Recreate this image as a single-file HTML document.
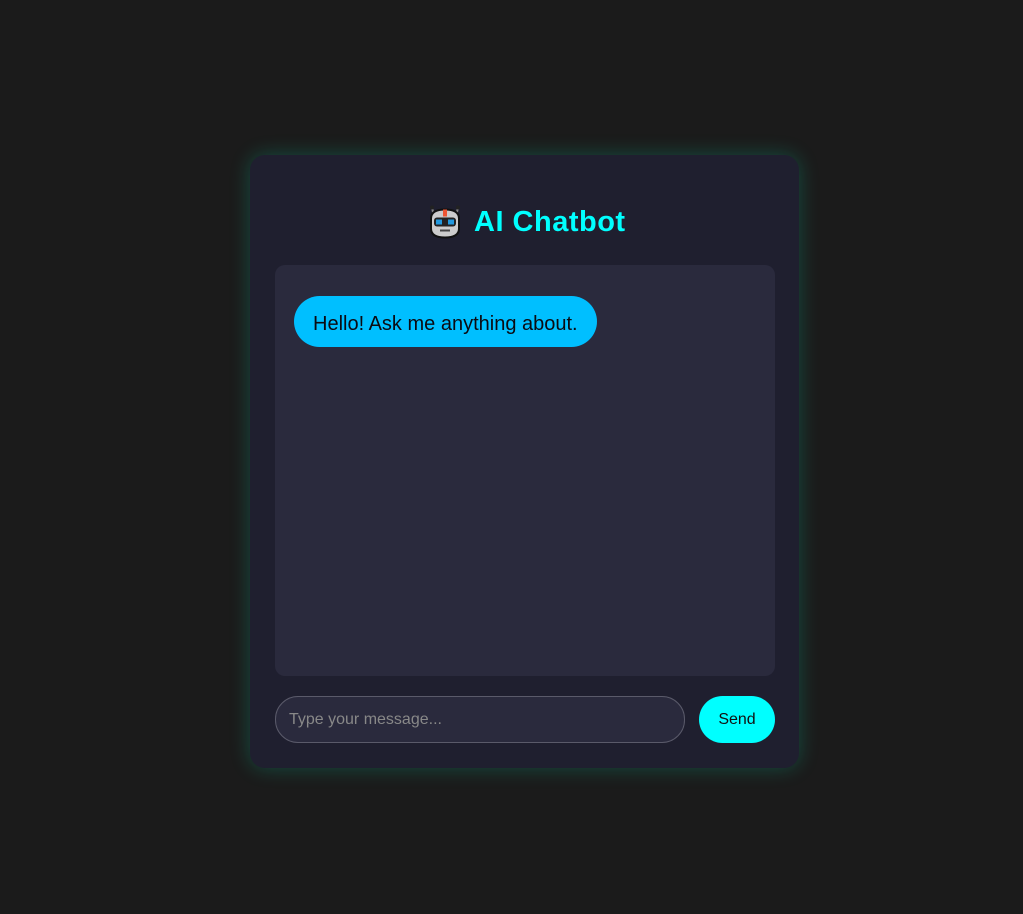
<!DOCTYPE html>
<html><head><style>
html,body{margin:0;height:914px;background:#1b1b1b;font-family:"Liberation Sans",sans-serif;}
.card{position:absolute;left:250px;top:155px;width:549px;height:613px;background:#1f1f2f;border-radius:15px;box-shadow:0 0 20px rgba(0,255,200,0.22);}
.title{position:absolute;left:474px;top:206px;color:#00ffff;font-weight:bold;font-size:29px;letter-spacing:0.5px;white-space:nowrap;}
.chat{position:absolute;left:275px;top:265px;width:500px;height:411px;background:#2a2a3d;border-radius:10px;}
.bubble{position:absolute;left:294px;top:296px;width:303px;height:51px;background:#00bfff;border-radius:26px;color:#0b0b12;font-size:20px;line-height:56px;text-indent:19px;white-space:nowrap;}
.input{position:absolute;left:275px;top:696px;width:408px;height:45px;border:1px solid #5a5a6a;border-radius:23px;background:#2a2a3d;color:#888;font-size:16px;line-height:45px;text-indent:13px;}
.send{position:absolute;left:699px;top:696px;width:76px;height:47px;background:#00ffff;border-radius:24px;color:#111;font-size:16px;line-height:47px;text-align:center;}
</style></head><body>
<div class="card"></div>
<svg style="position:absolute;left:427px;top:204px" width="36" height="35" viewBox="0 0 36 34">
<line x1="5" y1="3" x2="7" y2="12" stroke="#888" stroke-width="2"/><line x1="31" y1="3" x2="29" y2="12" stroke="#888" stroke-width="2"/>
<circle cx="5" cy="3" r="2" fill="#222"/><circle cx="31" cy="3" r="2" fill="#222"/>
<path d="M4 14 Q4 5 18 5 Q32 5 32 14 L32 24 Q32 33 18 33 Q4 33 4 24Z" fill="#ccc" stroke="#111" stroke-width="2"/>
<rect x="16" y="5" width="4" height="7" fill="#e53"/>
<rect x="7" y="13" width="22" height="9" rx="3" fill="#222"/>
<rect x="9" y="15" width="6" height="5" fill="#29d"/><rect x="21" y="15" width="6" height="5" fill="#29d"/>
<rect x="13" y="25" width="10" height="2" fill="#444"/>
</svg>
<div class="title">AI Chatbot</div>
<div class="chat"></div>
<div class="bubble">Hello! Ask me anything about.</div>
<div class="input">Type your message...</div>
<div class="send">Send</div>
</body></html>
